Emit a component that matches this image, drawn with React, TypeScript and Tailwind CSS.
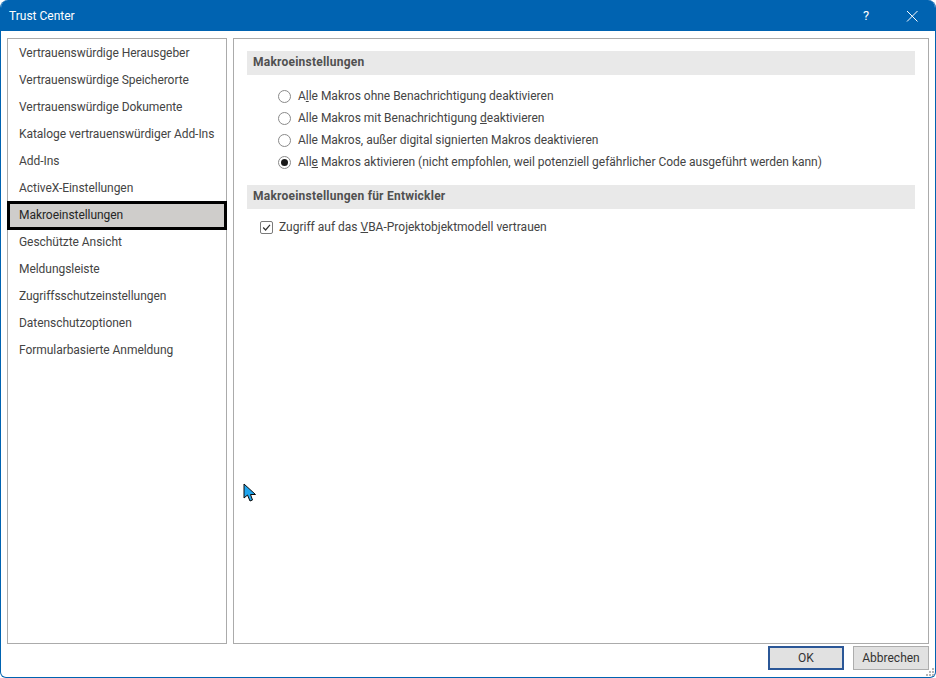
const font = { fontFamily: 'Roboto, sans-serif' };

const categories = [
  "Vertrauenswürdige Herausgeber",
  "Vertrauenswürdige Speicherorte",
  "Vertrauenswürdige Dokumente",
  "Kataloge vertrauenswürdiger Add-Ins",
  "Add-Ins",
  "ActiveX-Einstellungen",
  "Makroeinstellungen",
  "Geschützte Ansicht",
  "Meldungsleiste",
  "Zugriffsschutzeinstellungen",
  "Datenschutzoptionen",
  "Formularbasierte Anmeldung",
];

function Radio({ checked, children }: { checked?: boolean; children: React.ReactNode }) {
  return (
    <div className="flex h-[22px] items-center">
      <span className="flex h-[13px] w-[13px] items-center justify-center rounded-full border border-[#8a8a8a] bg-white">
        {checked && <span className="h-[7px] w-[7px] rounded-full bg-[#1a1a1a]" />}
      </span>
      <span className="ml-[7px] whitespace-nowrap tracking-[-0.02px]">{children}</span>
    </div>
  );
}

function SectionHeader({ children }: { children: React.ReactNode }) {
  return (
    <div className="flex h-6 items-center bg-[#e9e9e9] pb-[2px] pl-[6px] font-bold tracking-[0.23px] text-[#505050]">
      {children}
    </div>
  );
}

export default function App() {
  return (
    <div
      className="flex h-[678px] w-[936px] flex-col overflow-hidden rounded-t-[8px] rounded-b-[6px] border-x border-b border-[#0063b1] bg-white text-[12px] text-[#444444]"
      style={font}
    >
      <div className="flex h-[31px] shrink-0 items-center justify-between bg-[#0063b1] pl-[8px] text-white">
        <span>Trust Center</span>
        <div className="flex items-center">
          <span className="w-[46px] text-center text-[13px]">?</span>
          <svg width="46" height="14" viewBox="0 0 46 14" fill="none" stroke="white" strokeWidth="1">
            <path d="M18 2 L28.5 12.5 M28.5 2 L18 12.5" />
          </svg>
        </div>
      </div>

      <div className="flex min-h-0 flex-1 gap-[6px] pl-[6px] pr-[6px] pt-[7px]">
        <div className="h-[606px] w-[220px] shrink-0 border border-[#ababab] pt-[1px] tracking-[-0.05px]">
          {categories.map((c) =>
            c === "Makroeinstellungen" ? (
              <div
                key={c}
                className="flex h-[27px] items-center border-2 border-black bg-[#cfcdcb] pb-[2px] pl-[9px] text-[#262626] outline outline-1 outline-black"
              >
                {c}
              </div>
            ) : (
              <div key={c} className="flex h-[27px] items-center whitespace-nowrap pb-[2px] pl-[11px]">
                {c}
              </div>
            )
          )}
        </div>

        <div className="h-[606px] flex-1 border border-[#ababab] px-[13px] pt-3">
          <SectionHeader>Makroeinstellungen</SectionHeader>
          <div className="mt-[10px] pl-[31px]">
            <Radio>
              A<u>l</u>le Makros ohne Benachrichtigung deaktivieren
            </Radio>
            <Radio>
              Alle Makros mit Benachrichtigung <u>d</u>eaktivieren
            </Radio>
            <Radio>
              Alle Makros, außer di<u>g</u>ital signierten Makros deaktivieren
            </Radio>
            <Radio checked>
              All<u>e</u> Makros aktivieren (nicht empfohlen, weil potenziell gefährlicher Code ausgeführt werden kann)
            </Radio>
          </div>
          <div className="mt-[12px]">
            <SectionHeader>Makroeinstellungen für Entwickler</SectionHeader>
          </div>
          <div className="mt-[7px] flex h-[22px] items-center pl-[13px]">
            <span className="flex h-[13px] w-[13px] items-center justify-center rounded-[2px] border border-[#7a7a7a]">
              <svg width="9" height="9" viewBox="0 0 9 9" fill="none" stroke="#333333" strokeWidth="1.2">
                <path d="M1.2 4.5 L3.6 7 L8 1.8" />
              </svg>
            </span>
            <span className="ml-[6px] whitespace-nowrap">
              Zugriff auf das <u>V</u>BA-Projektobjektmodell vertrauen
            </span>
          </div>
        </div>
      </div>

      <div className="flex h-[33px] shrink-0 items-start justify-end gap-[9px] pr-[6px] pt-[2px]">
        <button className="h-[24px] w-[76px] border-2 border-[#2b5797] bg-[#e1e1e1] text-[12px] text-[#333333]">OK</button>
        <button className="h-[24px] w-[76px] border border-[#adadad] bg-[#e1e1e1] text-[12px] text-[#333333]">
          Abbrechen
        </button>
      </div>

      <svg className="absolute left-[243px] top-[483px]" width="14" height="20" viewBox="0 0 14 20">
        <path d="M1 1 L1 15 L4.5 12 L7 18 L9.5 17 L7.5 11.5 L12.5 11.5 Z" fill="#1fa5ee" stroke="#0a0a0a" strokeWidth="1" />
      </svg>
      <svg className="absolute left-[926px] top-[668px]" width="9" height="9" viewBox="0 0 9 9" fill="#b5b5b5">
        <rect x="6" y="0" width="2" height="2" />
        <rect x="3" y="3" width="2" height="2" />
        <rect x="6" y="3" width="2" height="2" />
        <rect x="0" y="6" width="2" height="2" />
        <rect x="3" y="6" width="2" height="2" />
        <rect x="6" y="6" width="2" height="2" />
      </svg>
    </div>
  );
}
